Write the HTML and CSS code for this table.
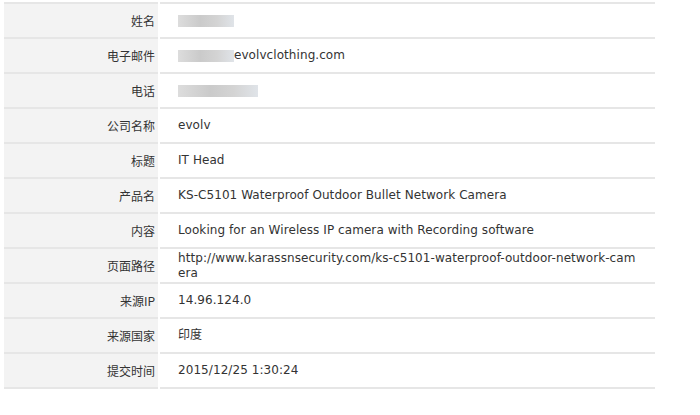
FILE: index.html
```html
<!DOCTYPE html>
<html>
<head>
<meta charset="utf-8">
<link rel="stylesheet" href="styles.css">
</head>
<body>
<table class="info">
<tr><th>姓名</th><td><span class="blur b1"></span></td></tr>
<tr><th>电子邮件</th><td><span class="blur b2"></span>evolvclothing.com</td></tr>
<tr><th>电话</th><td><span class="blur b3"></span></td></tr>
<tr><th>公司名称</th><td>evolv</td></tr>
<tr><th>标题</th><td>IT Head</td></tr>
<tr><th>产品名</th><td>KS-C5101 Waterproof Outdoor Bullet Network Camera</td></tr>
<tr><th>内容</th><td>Looking for an Wireless IP camera with Recording software</td></tr>
<tr><th>页面路径</th><td class="url">http://www.karassnsecurity.com/ks-c5101-waterproof-outdoor-network-cam<wbr>era</td></tr>
<tr><th>来源IP</th><td>14.96.124.0</td></tr>
<tr><th>来源国家</th><td>印度</td></tr>
<tr><th>提交时间</th><td>2015/12/25 1:30:24</td></tr>
</table>
</body>
</html>
```
FILE: styles.css
```css
html, body { margin: 0; padding: 0; background: #fff; }
body { padding: 2px 0 0 4px; }
.info {
  border-collapse: collapse;
  width: 651px;
  font-family: "DejaVu Sans", Verdana, "Noto Sans CJK SC", sans-serif;
  font-size: 12px;
  color: #333;
  border-top: 2px solid #e6e6e6;
}
.info tr { height: 35px; border-bottom: 2px solid #e6e6e6; }
.info th {
  width: 151px;
  background: #f3f3f3;
  font-weight: normal;
  text-align: right;
  padding: 0 3px 0 0;
  border-right: 2px solid #fff;
  font-family: "Noto Sans CJK SC", sans-serif;
  font-size: 12px;
  color: #333;
}
.info td {
  padding: 0 6px 0 18px;
  line-height: 15px;
  letter-spacing: 0.07px;
}
.info td.url { word-break: keep-all; overflow-wrap: anywhere; }
.blur {
  display: inline-block;
  vertical-align: middle;
  height: 12px;
  background: linear-gradient(90deg, #d4d4d4, #bdbdbd 40%, #c9c9c9 70%, #d8dde3);
  opacity: 0.8;
}
.b1 { width: 56px; }
.b2 { width: 56px; }
.b3 { width: 80px; }
```
